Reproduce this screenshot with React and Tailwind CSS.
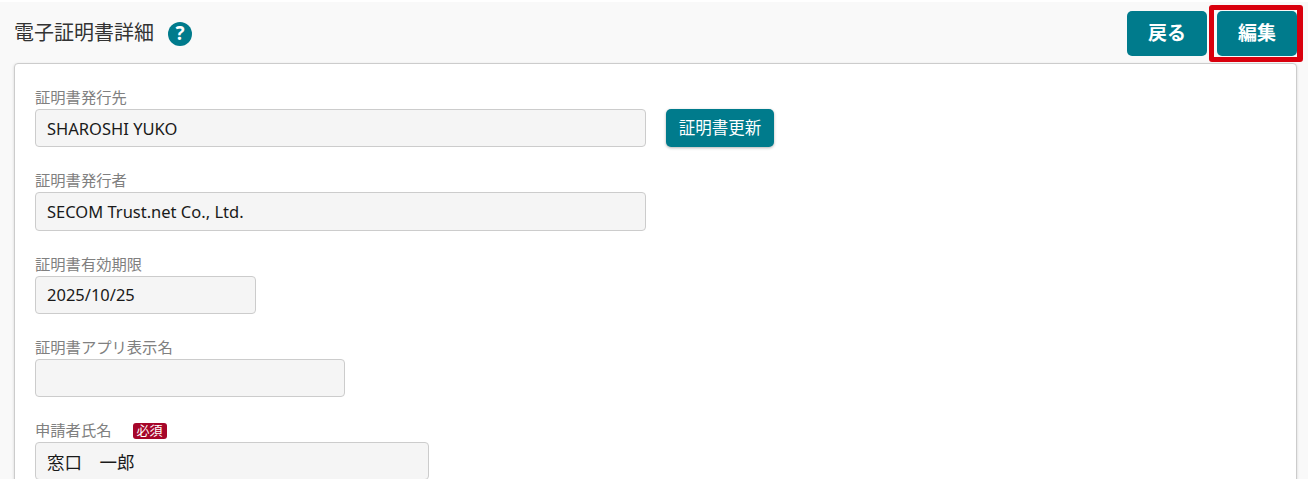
import React from 'react';

const FONT = 'font-["Noto_Sans","Noto_Sans_CJK_JP",sans-serif]';

const Field = ({ label, value, width, required, valueSize = 'text-[16.5px]', children }) => (
  <div className="mb-[22px] last:mb-0">
    <div className="flex h-[23px] items-center text-[15.3px] leading-[23px] text-[#808080]">
      <span>{label}</span>
      {required && (
        <span className="ml-[21px] flex h-[16px] w-[34px] items-center justify-center rounded-[3px] bg-[#a6062a] text-[13px] leading-none text-white">
          必須
        </span>
      )}
    </div>
    <div className="flex items-center">
      <div
        className={`flex h-[38.25px] items-center rounded-[4px] border border-[#cccccc] bg-[#f5f5f5] px-[11px] pt-[2px] text-[#1a1a1a] ${valueSize} ${width}`}
      >
        {value}
      </div>
      {children}
    </div>
  </div>
);

export default function App() {
  return (
    <div className={`relative h-[479px] w-[1308px] overflow-hidden bg-white pt-[2px] ${FONT}`}>
      <div className="h-full bg-[#f9f9f9] pl-[14px] pr-[11px]">
        {/* Header */}
        <div className="flex h-[61px] items-center justify-between pt-[2px]">
          <div className="flex items-center">
            <h1 className="pb-[2px] text-[20px] font-normal leading-none text-[#333333]">電子証明書詳細</h1>
            <span className="ml-[14px] flex h-[24px] w-[24px] items-center justify-center rounded-full bg-[#007b8c] text-[19px] font-bold leading-none text-white">
              ?
            </span>
          </div>
          <div className="flex gap-[10px]">
            <button className="h-[45px] w-[80px] rounded-[5px] bg-[#007b8c] text-[19px] font-bold text-white">戻る</button>
            <button className="h-[45px] w-[80px] rounded-[5px] bg-[#007b8c] text-[19px] font-bold text-white">編集</button>
          </div>
        </div>

        {/* Card */}
        <div className="h-[500px] rounded-[4px] border border-[#cccccc] bg-white pl-[20px] pt-[22px] shadow-[0_1px_3px_rgba(0,0,0,0.15)]">
          <Field label="証明書発行先" value="SHAROSHI YUKO" width="w-[611px]">
            <button className="ml-[20px] h-[38px] w-[108px] rounded-[5px] bg-[#007b8c] text-[16.5px] text-white shadow-[0_1px_3px_rgba(0,0,0,0.3)]">
              証明書更新
            </button>
          </Field>
          <Field label="証明書発行者" value="SECOM Trust.net Co., Ltd." width="w-[611px]" />
          <Field label="証明書有効期限" value="2025/10/25" width="w-[221px]" />
          <Field label="証明書アプリ表示名" value="" width="w-[310px]" />
          <Field label="申請者氏名" value="窓口　一郎" width="w-[394px]" valueSize="text-[17.5px]" required />
        </div>
      </div>

      {/* Annotation around the edit button */}
      <div className="absolute left-[1209px] top-[5px] h-[57px] w-[94px] rounded-[3px] border-[5px] border-[#d9000d] border-r-[6px]" />
    </div>
  );
}
